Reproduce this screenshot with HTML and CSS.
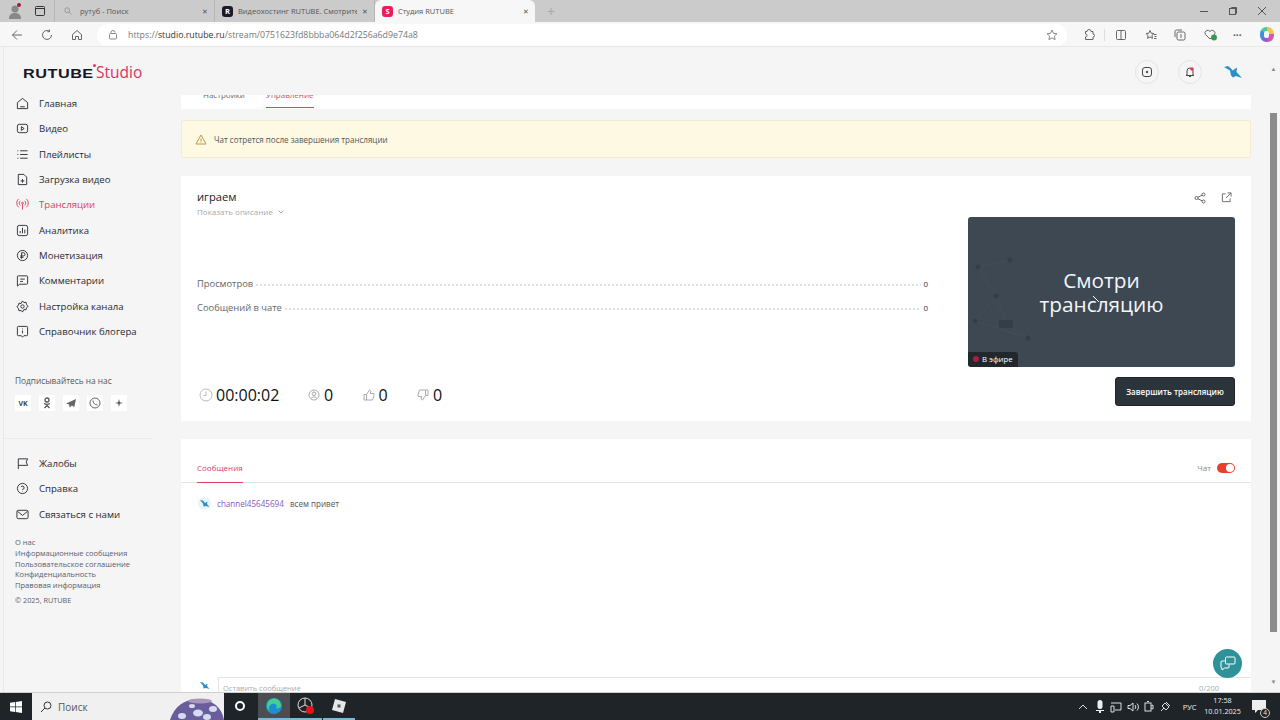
FILE: index.html
```html
<!DOCTYPE html>
<html lang="ru">
<head>
    <meta charset="UTF-8">
    <meta name="viewport" content="width=device-width, initial-scale=1.0">
    <title>Студия RUTUBE</title>
    <link rel="stylesheet" href="styles.css">
</head>
<body>
    <div class="tabstrip">
        <div class="profile">
            <svg width="16" height="18" viewBox="0 0 16 18"><circle cx="7" cy="7" r="3.5" fill="#888"/><path d="M1 17c0-5 3-6 6-6s6 1 6 6z" fill="#888"/><circle cx="11" cy="3" r="2" fill="#a01c3c"/></svg>
        </div>
        <div class="ws-icon">
            <svg width="12" height="12" viewBox="0 0 12 12" fill="none" stroke="#333"><rect x="1.5" y="1.5" width="9" height="9" rx="1"/><path d="M1.5 3.5h9"/></svg>
        </div>
        <div class="tab tab-first">
            <svg width="8" height="8" viewBox="0 0 8 8" fill="none" stroke="#999"><circle cx="3.2" cy="3.2" r="2.4"/><path d="M5 5l2.5 2.5"/></svg>
            <span class="tab-title">рутуб - Поиск</span>
            <span class="tab-x">✕</span>
        </div>
        <div class="tab">
            <span class="favicon favicon-dark">R</span>
            <span class="tab-title">Видеохостинг RUTUBE. Смотрите</span>
            <span class="tab-x">✕</span>
        </div>
        <div class="tab tab-active">
            <span class="favicon favicon-pink">S</span>
            <span class="tab-title">Студия RUTUBE</span>
            <span class="tab-x">✕</span>
        </div>
        <div class="tab-plus">+</div>
        <div class="window-btns">
            <svg width="10" height="10" viewBox="0 0 10 10" stroke="#555" fill="none"><path d="M1 5.5h8"/></svg>
            <svg width="10" height="10" viewBox="0 0 10 10" stroke="#555" fill="none"><rect x="1.5" y="2.5" width="6" height="6"/><path d="M3.5 2.5v-1h5v6h-1"/></svg>
            <svg width="10" height="10" viewBox="0 0 10 10" stroke="#555" fill="none"><path d="M1 1l8 8M9 1l-8 8"/></svg>
        </div>
    </div>

    <div class="toolbar">
        <div class="nav-btns">
            <svg width="12" height="12" viewBox="0 0 12 12" fill="none" stroke="#666"><path d="M11 6H1.500M6 1.500L1.500 6 6 10.500"/></svg>
            <svg width="12" height="12" viewBox="0 0 12 12" fill="none" stroke="#666"><path d="M10.500 6A4.500 4.500 0 1 1 8.500 2.200M8.500.5v2.200h-2.200"/></svg>
            <svg width="12" height="12" viewBox="0 0 12 12" fill="none" stroke="#666"><path d="M1.500 5.500L6 1.500l4.500 4v5H7.500V7.500h-3v3h-3z"/></svg>
        </div>
        <div class="address">
            <svg width="10" height="10" viewBox="0 0 10 10" fill="none" stroke="#888"><rect x="1.500" y="3.500" width="7" height="5.500" rx="1"/><path d="M3 3.500V2.500a2 2 0 0 1 4 0"/></svg>
            <span class="url">https://<b>studio.rutube.ru</b>/stream/0751623fd8bbba064d2f256a6d9e74a8</span>
            <svg class="addr-star" width="12" height="12" viewBox="0 0 12 12" fill="none" stroke="#888"><path d="M6 1l1.500 3.300 3.500.4-2.600 2.400.7 3.500L6 8.900l-3.100 1.700.7-3.500L1 4.700l3.500-.4z"/></svg>
        </div>
        <div class="browser-tools">
            <svg width="12" height="12" viewBox="0 0 12 12" fill="none" stroke="#666"><path d="M4 2.500a2 2 0 0 1 4 0H10v2.500a1.500 1.500 0 0 1 0 3v2.500H2.500V8a1.500 1.500 0 0 0 0-3V2.500z"/></svg>
            <span class="tool-sep"></span>
            <svg width="12" height="12" viewBox="0 0 12 12" fill="none" stroke="#666"><rect x="1.500" y="1.500" width="9" height="9" rx="1"/><path d="M6 1.500v9"/></svg>
            <svg width="12" height="12" viewBox="0 0 12 12" fill="none" stroke="#666"><path d="M5 1.500l1.200 2.700 2.800.3-2.100 2 .6 2.800L5 8l-2.500 1.300.6-2.800-2.100-2 2.800-.3zM9 5.500h2.500M9.500 7.500h2M9 9.500h2.500"/></svg>
            <svg width="12" height="12" viewBox="0 0 12 12" fill="none" stroke="#666"><rect x="3" y="3" width="8" height="8" rx="1.500"/><path d="M1 8V2.500A1.500 1.500 0 0 1 2.500 1H8M7 5v4"/></svg>
            <svg width="14" height="12" viewBox="0 0 14 12"><path d="M6 10L1.500 5.500a2.500 2.500 0 0 1 4.500-3 2.500 2.500 0 0 1 4.500 3z" fill="none" stroke="#666"/><circle cx="10" cy="8.500" r="3" fill="#3a9a55"/></svg>
            <span class="dots">···</span>
            <span class="copilot"></span>
        </div>
    </div>

    <div class="app">
        <header class="app-head">
            <div class="logo"><span class="logo-rt">RUTUBE</span><span class="logo-dot"></span><span class="logo-st">Studio</span></div>
            <div class="head-actions">
                <span class="round-btn">
                    <svg width="12" height="12" viewBox="0 0 12 12" fill="none" stroke="#444"><rect x="1.500" y="1.500" width="9" height="9" rx="2.500"/><circle cx="6" cy="6" r=".8" fill="#444"/></svg>
                </span>
                <span class="round-btn">
                    <svg width="12" height="12" viewBox="0 0 12 12" fill="none" stroke="#444"><path d="M3 9V5a3 3 0 0 1 6 0v4l1 .5H2zM5 10.500h2"/><circle cx="8" cy="3" r="1.800" fill="#e8355f" stroke="none"/></svg>
                </span>
                <svg class="bird" width="18" height="14" viewBox="0 0 18 14"><path d="M0 2l4-1 3 2.500 1.500 2 4.500-3-.5 4.500L18 13l-6-2-3 1.500-2-2-1-5z" fill="#2b8fc9"/></svg>
            </div>
        </header>

        <div class="app-body">
            <aside class="sidebar">
                <nav class="side-nav side-nav-top">
                    <a class="side-link"><svg viewBox="0 0 14 14"><path d="M1.500 6L7 1.500 12.500 6v6.500h-11zM4.500 10.500h5"/></svg>Главная</a>
                    <a class="side-link"><svg viewBox="0 0 14 14"><rect x="1.500" y="2.500" width="11" height="9" rx="2"/><path d="M5.800 5l3 2-3 2z"/></svg>Видео</a>
                    <a class="side-link"><svg viewBox="0 0 14 14"><path d="M4.500 3h8M4.500 7h8M4.500 11h8M1.500 3h1M1.500 7h1M1.500 11h1"/></svg>Плейлисты</a>
                    <a class="side-link"><svg viewBox="0 0 14 14"><path d="M2.500 1.500h6l3 3v8h-9zM7 6.500v4M5 8.500h4"/></svg>Загрузка видео</a>
                    <a class="side-link side-link-on"><svg viewBox="0 0 14 14"><circle cx="7" cy="5.500" r="1"/><path d="M7 6.500v6M4.800 8A3 3 0 0 1 4.800 3M9.200 3a3 3 0 0 1 0 5M2.800 10a6 6 0 0 1 0-9M11.200 1a6 6 0 0 1 0 9"/></svg>Трансляции</a>
                    <a class="side-link"><svg viewBox="0 0 14 14"><rect x="1.500" y="1.500" width="11" height="11" rx="2"/><path d="M4.500 10V7.500M7 10V4M9.500 10V6"/></svg>Аналитика</a>
                    <a class="side-link"><svg viewBox="0 0 14 14"><circle cx="7" cy="7" r="5.500"/><path d="M6 10.500V4h2a1.700 1.700 0 0 1 0 3.500H4.500M4.500 9H8"/></svg>Монетизация</a>
                    <a class="side-link"><svg viewBox="0 0 14 14"><path d="M2.500 2h9a1 1 0 0 1 1 1v7a1 1 0 0 1-1 1H4l-2.500 2V3a1 1 0 0 1 1-1zM4.500 5.500h5M4.500 8h3"/></svg>Комментарии</a>
                    <a class="side-link"><svg viewBox="0 0 14 14"><path d="M7 1l1.500 1.800 2.300-.4.500 2.300L13 7l-1.700 1.300-.5 2.300-2.300-.4L7 13l-1.500-1.800-2.300.4-.5-2.300L1 7l1.700-1.300.5-2.300 2.300.4z"/><circle cx="7" cy="7" r="1.800"/></svg>Настройка канала</a>
                    <a class="side-link"><svg viewBox="0 0 14 14"><path d="M2.500 1.500h9a1 1 0 0 1 1 1v8a1 1 0 0 1-1 1H8.500L7 13l-1.500-1.500h-3a1 1 0 0 1-1-1v-8a1 1 0 0 1 1-1zM7 6v3M7 3.800v.8"/></svg>Справочник блогера</a>
                </nav>

                <div class="follow">
                    <p class="follow-title">Подписывайтесь на нас</p>
                    <div class="socials">
                        <span class="social social-vk">VK</span>
                        <span class="social"><svg width="10" height="12" viewBox="0 0 10 12" fill="none" stroke="#555" stroke-width="1.300"><circle cx="5" cy="3" r="2"/><path d="M2 6.500c2 1.200 4 1.200 6 0M5 7.500v1M2.500 11L5 8.500 7.500 11"/></svg></span>
                        <span class="social"><svg width="12" height="11" viewBox="0 0 12 11"><path d="M11 1L1 5.500l3 1 .8 3 2-2 2.500 1.500z" fill="#666"/></svg></span>
                        <span class="social"><svg width="12" height="12" viewBox="0 0 12 12" fill="none" stroke="#666"><circle cx="6" cy="6" r="5"/><path d="M4 3.500c0 2.500 2 4.500 4.500 4.500"/></svg></span>
                        <span class="social"><svg width="8" height="8" viewBox="0 0 8 8"><path d="M4 0l.8 3.200L8 4l-3.200.8L4 8l-.8-3.200L0 4l3.200-.8z" fill="#555"/></svg></span>
                    </div>
                </div>

                <nav class="side-nav side-nav-low">
                    <a class="side-link"><svg viewBox="0 0 14 14"><path d="M2.500 13V2h10l-1.500 3.500 1.500 3.500H2.500"/></svg>Жалобы</a>
                    <a class="side-link"><svg viewBox="0 0 14 14"><circle cx="7" cy="7" r="5.500"/><path d="M5.300 5.500A1.800 1.800 0 1 1 7 8v.5M7 10v.5"/></svg>Справка</a>
                    <a class="side-link"><svg viewBox="0 0 14 14"><rect x="1" y="2.500" width="12" height="9" rx="1.500"/><path d="M1.500 3.500L7 8l5.500-4.500"/></svg>Связаться с нами</a>
                </nav>

                <div class="legal">
                    <a>О нас</a>
                    <a>Информационные сообщения</a>
                    <a>Пользовательское соглашение</a>
                    <a>Конфиденциальность</a>
                    <a>Правовая информация</a>
                    <p class="copyright">© 2025, RUTUBE</p>
                </div>
            </aside>

            <main class="content">
                <div class="subtabs">
                    <span class="subtab">Настройки</span>
                    <span class="subtab subtab-on">Управление</span>
                </div>

                <div class="notice">
                    <svg width="12" height="11" viewBox="0 0 12 11" fill="none" stroke="#b89a4a"><path d="M6 1l5 9H1zM6 4.500v3M6 8.500v.5"/></svg>
                    Чат сотрется после завершения трансляции
                </div>

                <section class="card stream">
                    <div class="stream-info">
                        <h2 class="stream-title">играем</h2>
                        <p class="stream-more">Показать описание <svg class="chev" width="6" height="4" viewBox="0 0 6 4" fill="none" stroke="#aaa"><path d="M.5.500L3 3 5.500.5"/></svg></p>
                        <div class="leaders">
                            <div class="leader"><span>Просмотров</span><i></i><span class="leader-val">0</span></div>
                            <div class="leader"><span>Сообщений в чате</span><i></i><span class="leader-val">0</span></div>
                        </div>
                        <div class="counters">
                            <span class="counter counter-time">
                                <svg width="14" height="14" viewBox="0 0 14 14" fill="none" stroke="#bbb"><circle cx="7" cy="7" r="6"/><path d="M7 3.500V7.500H4.500"/></svg>
                                00:00:02
                            </span>
                            <span class="counter">
                                <svg width="12" height="12" viewBox="0 0 12 12" fill="none" stroke="#aaa"><circle cx="6" cy="6" r="5"/><circle cx="6" cy="4.800" r="1.800"/><path d="M3 9.500c1-2 5-2 6 0"/></svg>
                                0
                            </span>
                            <span class="counter">
                                <svg width="12" height="12" viewBox="0 0 12 12" fill="none" stroke="#aaa"><path d="M1 5.500h2.500v5.500H1zM3.500 5.500L6.500 1c1.200 0 1.500 1 1.200 2L7.200 4.500H11v2L9.500 11h-6"/></svg>
                                0
                            </span>
                            <span class="counter">
                                <svg width="12" height="12" viewBox="0 0 12 12" fill="none" stroke="#aaa"><path d="M11 6.500H8.500V1H11zM8.500 6.500L5.500 11c-1.200 0-1.500-1-1.200-2l.5-1.500H1v-2L2.500 1h6"/></svg>
                                0
                            </span>
                        </div>
                    </div>
                    <div class="stream-side">
                        <div class="stream-icons">
                            <svg width="12" height="12" viewBox="0 0 12 12" fill="none" stroke="#666"><circle cx="2.500" cy="6" r="1.500"/><circle cx="9.500" cy="2.500" r="1.500"/><circle cx="9.500" cy="9.500" r="1.500"/><path d="M4 5.200l4.200-2M4 6.800l4.200 2"/></svg>
                            <svg width="11" height="11" viewBox="0 0 12 12" fill="none" stroke="#666"><path d="M5 2H1.500v8.500H10V7M7 1h4v4M11 1L5.500 6.500"/></svg>
                        </div>
                        <div class="preview">
                            <svg class="preview-dots" width="70" height="130" viewBox="0 0 70 130">
                                <path d="M10 50L42 43M10 50L28 79M28 79L7 104M28 79L38 107M7 104L60 121M38 107L60 121" stroke="#434e59" fill="none"/>
                                <g fill="#343e48">
                                    <circle cx="10" cy="50" r="2.500"/><circle cx="42" cy="43" r="2.500"/><circle cx="28" cy="79" r="2.500"/><circle cx="7" cy="104" r="2.500"/><circle cx="60" cy="121" r="2.500"/>
                                    <rect x="31" y="103" width="14" height="8" rx="1"/>
                                </g>
                            </svg>
                            <p class="preview-text">Смотри<br>трансляцию</p>
                            <svg class="preview-cursor" width="10" height="9" viewBox="0 0 10 9" fill="none" stroke="#fff"><path d="M1 1l6 6"/></svg>
                            <span class="live-badge"><i></i>В эфире</span>
                        </div>
                        <button class="end-btn">Завершить трансляцию</button>
                    </div>
                </section>

                <section class="card chat">
                    <div class="chat-head">
                        <span class="chat-tab">Сообщения</span>
                        <span class="chat-switch">Чат <i class="toggle"></i></span>
                    </div>
                    <div class="chat-feed">
                        <div class="msg">
                            <svg class="avatar" width="13" height="13" viewBox="0 0 13 13"><circle cx="6.500" cy="6.500" r="6.500" fill="#eaf3f8"/><path d="M2 3l3 .5 2 2.500 2.500-1.500L9 7l2.500 3L8 9l-2.500.5-.5-3z" fill="#2b8fc9"/></svg>
                            <span class="msg-name">channel45645694</span>
                            <span class="msg-text">всем привет</span>
                        </div>
                    </div>
                    <div class="chat-input">
                        <svg class="avatar" width="13" height="13" viewBox="0 0 13 13"><path d="M2 3l3 .5 2 2.500 2.500-1.500L9 7l2.500 3L8 9l-2.500.5-.5-3z" fill="#2b8fc9"/></svg>
                        <div class="input-box">
                            <span>Оставить сообщение</span>
                            <span>0/200</span>
                        </div>
                    </div>
                </section>
            </main>

            <div class="scrollbar">
                <span class="scroll-arrow">▲</span>
                <span class="scroll-thumb"></span>
                <span class="scroll-arrow">▼</span>
            </div>
        </div>

        <button class="support">
            <svg width="16" height="15" viewBox="0 0 16 15" fill="none" stroke="#fff"><rect x="5.500" y="1" width="9.500" height="7" rx="1"/><path d="M5 5H2a1 1 0 0 0-1 1v5a1 1 0 0 0 1 1v2l2.500-2H8a1 1 0 0 0 1-1V8.500"/></svg>
        </button>
    </div>

    <footer class="taskbar">
        <div class="start">
            <svg width="12" height="12" viewBox="0 0 12 12" fill="#fff"><path d="M0 1.700L5 1v4.600H0zM5.700.9L12 0v5.600H5.700zM0 6.300h5v4.700l-5-.7zM5.700 6.300H12V12l-6.300-.9z"/></svg>
        </div>
        <div class="task-search">
            <svg width="12" height="12" viewBox="0 0 12 12" fill="none" stroke="#333"><circle cx="7.500" cy="4.500" r="3.500"/><path d="M5 7l-4 4"/></svg>
            <span>Поиск</span>
            <svg class="search-art" width="54" height="24" viewBox="0 0 54 24"><path d="M0 24C4 10 16 2 30 3c12 1 22 8 24 21z" fill="#6a5d9c"/><ellipse cx="30" cy="5" rx="12" ry="2.500" fill="#a996b8"/><g fill="#d4dcf2"><ellipse cx="12" cy="20" rx="4" ry="3"/><ellipse cx="28" cy="17" rx="5" ry="3.500"/><ellipse cx="43" cy="13" rx="4" ry="3"/><ellipse cx="22" cy="10" rx="3" ry="2"/><ellipse cx="37" cy="21" rx="4" ry="3"/></g></svg>
        </div>
        <div class="task-apps">
            <span class="task-app"><i class="cortana"></i></span>
            <span class="task-app task-app-on">
                <svg width="18" height="18" viewBox="0 0 18 18"><circle cx="9" cy="9" r="8" fill="#1b8fd6"/><path d="M2 9a7 7 0 0 1 14-1c0 3-3 4-5 3 2-3-1-5-4-4-3 1-4 4-2 7-2-1-3-3-3-5z" fill="#46d08c"/></svg>
            </span>
            <span class="task-app task-app-open">
                <svg width="18" height="18" viewBox="0 0 18 18"><circle cx="8" cy="8" r="7" fill="#222" stroke="#ddd"/><path d="M8 1v7l6 3M8 8l-6 3" stroke="#ddd" fill="none"/><circle cx="13" cy="13" r="4" fill="#e8141c"/></svg>
            </span>
            <span class="task-app task-app-open">
                <svg width="16" height="16" viewBox="0 0 16 16"><path d="M4 1l11 3-3 11L1 12z" fill="#e6e6e6"/><rect x="6.500" y="6.500" width="3" height="3" fill="#555"/></svg>
            </span>
        </div>
        <div class="tray">
            <div class="tray-icons">
                <svg width="10" height="6" viewBox="0 0 10 6" fill="none" stroke="#ddd"><path d="M1 5l4-4 4 4"/></svg>
                <svg width="8" height="13" viewBox="0 0 8 13" fill="#eee"><rect x="1.500" width="5" height="9" rx="2.500"/><path d="M0 10h8v1H0zM3 11h2v2H3z"/></svg>
                <svg width="12" height="12" viewBox="0 0 12 12" fill="none" stroke="#ddd"><path d="M1 2h10v7H5M1 5v6h3V5z"/></svg>
                <svg width="12" height="10" viewBox="0 0 12 10" fill="none" stroke="#ddd"><path d="M1 3.500h2L6 1v8L3 6.500H1zM8 3a3 3 0 0 1 0 4M10 1.500a5 5 0 0 1 0 7"/></svg>
                <svg width="10" height="12" viewBox="0 0 10 12" fill="none" stroke="#ddd"><rect x="1" y="2" width="6" height="8"/><path d="M7 5l2-1v4L7 7M3 .5h2"/></svg>
                <svg width="12" height="12" viewBox="0 0 12 12" fill="none" stroke="#ddd"><path d="M2 10l3-3M6 2l4 4-3 3-4-4zM7 1l4 4"/></svg>
            </div>
            <span class="tray-lang">РУС</span>
            <span class="tray-clock">17:58<br>10.01.2025</span>
            <span class="tray-notif">
                <svg width="14" height="13" viewBox="0 0 14 13" fill="#eee"><path d="M0 0h14v10H6l-3 3v-3H0z"/></svg>
                <i class="notif-count">4</i>
            </span>
        </div>
    </footer>
</body>
</html>
```

FILE: styles.css
```css
* {
    box-sizing: border-box;
}
body {
    font-family: "Open Sans", "Noto Sans", sans-serif;
    background-color: #f5f5f5;
    color: #222;
    margin: 0;
    width: 1280px;
    height: 720px;
    overflow: hidden;
    display: flex;
    flex-direction: column;
}
p, h2 {
    margin: 0;
}

/* browser chrome */
.tabstrip {
    height: 22px;
    flex: none;
    background-color: #cbcbcb;
    display: flex;
    align-items: center;
    font-size: 7.5px;
    color: #555;
}
.profile {
    width: 32px;
    padding-left: 8px;
    display: flex;
}
.ws-icon {
    width: 22px;
    padding-left: 2px;
    display: flex;
}
.tab {
    width: 160px;
    height: 22px;
    padding: 0 4px 0 7px;
    display: flex;
    align-items: center;
    gap: 5px;
    border-right: 1px solid #b5b5b5;
}
.tab-first {
    width: 161px;
    padding-left: 9px;
    gap: 7px;
    border-left: 1px solid #b5b5b5;
}
.tab-active {
    background-color: #f7f7f7;
    border-right: 0;
    border-radius: 6px 6px 0 0;
}
.tab-title {
    flex: 1;
    white-space: nowrap;
    overflow: hidden;
    padding-left: 1px;
}
.tab-x {
    font-size: 7px;
    margin-right: 2px;
}
.favicon {
    width: 11px;
    height: 11px;
    border-radius: 3px;
    color: #fff;
    font-size: 7.5px;
    font-weight: 700;
    line-height: 11px;
    text-align: center;
    margin-right: -1px;
}
.favicon-dark {
    background-color: #1a1a2c;
}
.favicon-pink {
    background-color: #e5205e;
}
.tab-plus {
    margin-left: 12px;
    font-size: 14px;
    color: #a8a8a8;
}
.window-btns {
    margin-left: auto;
    padding-right: 13px;
    display: flex;
    gap: 19px;
}
.toolbar {
    height: 25px;
    flex: none;
    background-color: #f7f7f7;
    display: flex;
    align-items: center;
    padding-top: 1px;
    border-bottom: 1px solid #e8e8e8;
}
.nav-btns {
    width: 97px;
    padding-left: 11px;
    display: flex;
    gap: 18px;
}
.address {
    width: 970px;
    height: 22px;
    background-color: #fff;
    border-radius: 11px;
    display: flex;
    align-items: center;
    padding: 0 9px 0 11px;
    gap: 10px;
}
.url {
    font-size: 8.77px;
    color: #777;
}
.url b {
    font-weight: 400;
    color: #333;
}
.addr-star {
    margin-left: auto;
}
.browser-tools {
    flex: 1;
    padding-left: 16px;
    display: flex;
    align-items: center;
    gap: 17.5px;
}
.tool-sep {
    width: 1px;
    height: 12px;
    margin: 0 -7px 0 -9px;
    background-color: #ddd;
}
.dots {
    font-size: 10px;
    font-weight: 700;
    color: #555;
    width: 9px;
    margin-left: -2px;
}
.copilot {
    width: 14px;
    height: 15px;
    border-radius: 45%;
    background: conic-gradient(#f2c14e 0 25%, #d655b0 25% 50%, #8e5ad6 50% 62%, #3f8fe0 62% 85%, #46c8a0 85% 100%);
    display: flex;
    align-items: center;
    justify-content: center;
}
.copilot::after {
    content: "";
    width: 5px;
    height: 7px;
    background-color: #f7f7f7;
    border-radius: 2px;
}

/* studio shell */
.app {
    flex: 1;
    min-height: 0;
    position: relative;
    display: flex;
    flex-direction: column;
    margin-left: 3px;
    border-left: 1px solid #e8e8e8;
}
.app-head {
    height: 48px;
    flex: none;
    display: flex;
    align-items: center;
    justify-content: space-between;
    padding: 2px 38px 0 19px;
}
.logo {
    display: flex;
    align-items: baseline;
    position: relative;
}
.logo-rt {
    font-family: "Liberation Sans", sans-serif;
    font-size: 13px;
    font-weight: 700;
    letter-spacing: .4px;
    transform: scaleX(1.25);
    transform-origin: left;
    width: 73px;
    color: #17171f;
}
.logo-st {
    font-size: 15.5px;
    line-height: 18px;
    color: #d8325f;
}
.logo-dot {
    position: absolute;
    left: 70px;
    top: 1px;
    width: 3px;
    height: 3px;
    border-radius: 50%;
    background-color: #e8355f;
}
.head-actions {
    display: flex;
    align-items: center;
    gap: 18.5px;
}
.round-btn {
    width: 24px;
    height: 24px;
    border: 1px solid #e3e3e3;
    border-radius: 50%;
    display: flex;
    align-items: center;
    justify-content: center;
}
.bird {
    margin-left: 4px;
}
.app-body {
    flex: 1;
    min-height: 0;
    display: flex;
}

/* left menu */
.sidebar {
    width: 177px;
    flex: none;
    font-size: 9.6px;
}
.side-nav {
    display: flex;
    flex-direction: column;
}
.side-nav-top {
    margin-top: -4px;
}
.side-link {
    height: 25.3px;
    display: flex;
    align-items: center;
    gap: 10px;
    padding-left: 12px;
    color: #2b2b33;
}
.side-link svg {
    width: 13px;
    height: 13px;
    fill: none;
    stroke: #2b2b33;
    flex: none;
}
.side-link-on {
    color: #e0405f;
}
.side-link-on svg {
    stroke: #e0405f;
}
.follow {
    margin-top: 31.5px;
    padding: 0 0 27px 11px;
    width: 148px;
    border-bottom: 1px solid #ececec;
}
.follow-title {
    font-size: 8.3px;
    color: #555;
    margin-bottom: 9px;
}
.socials {
    display: flex;
    gap: 8px;
}
.social {
    width: 16px;
    height: 16px;
    background-color: #fff;
    display: flex;
    align-items: center;
    justify-content: center;
    color: #444;
}
.social-vk {
    font-size: 7px;
    font-weight: 700;
}
.side-nav-low {
    margin-top: 11.5px;
}
.legal {
    margin-top: 10.5px;
    padding-left: 11px;
    display: flex;
    flex-direction: column;
    font-size: 7.55px;
    line-height: 10.6px;
    color: #5c5c6c;
}
.copyright {
    margin-top: 5px;
    font-size: 7.3px;
}

/* main column */
.content {
    width: 1070px;
    flex: none;
    overflow: hidden;
    display: flex;
    flex-direction: column;
}
.subtabs {
    height: 14px;
    flex: none;
    background-color: #fff;
    overflow: hidden;
    display: flex;
    align-items: flex-end;
    gap: 21px;
    padding-left: 22px;
    font-size: 8px;
    color: #666;
}
.subtab {
    height: 13px;
    line-height: 1;
    margin-top: -9px;
    transform: translateY(-5px);
}
.subtab-on {
    color: #e0405f;
    position: relative;
}
.subtab-on::after {
    content: "";
    position: absolute;
    left: 0;
    right: 0;
    bottom: -4px;
    height: 1px;
    background-color: #e0405f;
}
.notice {
    margin-top: 11px;
    height: 38px;
    flex: none;
    background-color: #fdf9e3;
    border: 1px solid #f3ecd0;
    border-radius: 2px;
    display: flex;
    align-items: center;
    gap: 7px;
    padding-left: 13px;
    font-size: 8.03px;
    color: #555;
}
.card {
    background-color: #fff;
}
.stream {
    margin-top: 18px;
    height: 245px;
    flex: none;
    display: flex;
    padding: 14px 16px 15px;
}
.stream-info {
    flex: 1;
    display: flex;
    flex-direction: column;
    padding-right: 40px;
}
.stream-title {
    font-size: 11.2px;
    font-weight: 400;
    line-height: 14px;
    color: #222;
}
.stream-more {
    font-size: 8px;
    line-height: 12px;
    margin-top: 2px;
    color: #aaa;
}
.chev {
    margin-left: 3px;
    vertical-align: 1px;
}
.leaders {
    margin-top: 59.5px;
    display: flex;
    flex-direction: column;
    gap: 12px;
    font-size: 9.35px;
    line-height: 12px;
    color: #666;
}
.leader {
    display: flex;
    align-items: center;
}
.leader i {
    flex: 1;
    height: 2px;
    margin: 3px 2px 0;
    background-image: radial-gradient(circle, #bbb .6px, transparent .8px);
    background-size: 4px 2px;
}
.leader-val {
    font-size: 8px;
    color: #333;
}
.counters {
    margin-top: auto;
    margin-bottom: 1px;
    display: flex;
    align-items: center;
    font-size: 16px;
    line-height: 20px;
    color: #111;
}
.counter {
    display: flex;
    align-items: center;
    gap: 4px;
    width: 54.500px;
}
.counter svg {
    flex: none;
}
.counter-time {
    width: 111px;
    padding-left: 2px;
    gap: 3px;
}
.stream-side {
    width: 267px;
    flex: none;
    display: flex;
    flex-direction: column;
}
.stream-icons {
    height: 27px;
    padding: 2px 3px 0 0;
    display: flex;
    justify-content: flex-end;
    gap: 15px;
}
.preview {
    height: 150px;
    flex: none;
    position: relative;
    overflow: hidden;
    background-color: #3d4853;
    border-radius: 3px;
    display: flex;
    align-items: center;
    justify-content: center;
}
.preview-dots {
    position: absolute;
    left: 0;
    top: 0;
}
.preview-text {
    font-size: 20.8px;
    line-height: 24px;
    text-align: center;
    color: #f4f6f8;
    padding-bottom: 1px;
    position: relative;
}
.preview-cursor {
    position: absolute;
    left: 124px;
    top: 78px;
}
.live-badge {
    position: absolute;
    left: 0;
    bottom: 0;
    height: 15px;
    padding: 0 5px 1px;
    display: flex;
    align-items: center;
    gap: 3px;
    font-size: 7.8px;
    color: #fff;
    background-color: #22272d;
    border-radius: 0 3px 0 3px;
}
.live-badge i {
    width: 6px;
    height: 6px;
    border-radius: 50%;
    background-color: #a8203f;
}
.end-btn {
    margin: 10px 0 0 auto;
    width: 120px;
    height: 29px;
    padding: 0;
    border: 1px solid #1f262b;
    border-radius: 3px;
    background-color: #2b343b;
    color: #fff;
    font-family: inherit;
    font-size: 8px;
    font-weight: 600;
}
.chat {
    margin-top: 18px;
    flex: 1;
    min-height: 0;
    display: flex;
    flex-direction: column;
}
.chat-head {
    height: 44px;
    flex: none;
    display: flex;
    align-items: center;
    justify-content: space-between;
    padding: 15px 16px 0;
    border-bottom: 1px solid #e4e4e4;
    font-size: 8px;
}
.chat-tab {
    align-self: flex-end;
    height: 29px;
    line-height: 28px;
    color: #e0405f;
    border-bottom: 1px solid #e0405f;
    margin-bottom: -1px;
}
.chat-switch {
    display: flex;
    align-items: center;
    gap: 6px;
    color: #888;
    margin-top: -1px;
}
.toggle {
    width: 18px;
    height: 10px;
    border-radius: 5px;
    background-color: #e8402f;
    position: relative;
}
.toggle::after {
    content: "";
    position: absolute;
    right: 1px;
    top: 1px;
    width: 8px;
    height: 8px;
    border-radius: 50%;
    background-color: #fff;
}
.chat-feed {
    flex: 1;
    padding: 14px 17px;
}
.msg {
    display: flex;
    align-items: center;
    gap: 6px;
    font-size: 8.1px;
    color: #555;
}
.msg-name {
    color: #8a55c0;
}
.chat-input {
    height: 15px;
    flex: none;
    display: flex;
    padding-left: 17px;
    overflow: hidden;
}
.avatar {
    flex: none;
}
.chat-input .avatar {
    margin-top: 2px;
}
.input-box {
    flex: 1;
    margin-left: 7px;
    height: 30px;
    border-top: 1px solid #e4e4e4;
    border-left: 1px solid #e4e4e4;
    display: flex;
    justify-content: space-between;
    padding: 5px 32px 0 4px;
    font-size: 7.5px;
    color: #aaa;
}
.scrollbar {
    width: 13px;
    margin-left: 16px;
    margin-top: -48px;
    padding: 18px 0 6px;
    flex: none;
    background-color: #f5f5f5;
    display: flex;
    flex-direction: column;
    align-items: center;
    font-size: 6px;
    color: #888;
    height: calc(100% + 48px);
}
.scroll-arrow {
    line-height: 8px;
}
.scroll-thumb {
    width: 7px;
    height: 519px;
    margin: 40px 0 auto;
    background-color: #8c8c8c;
}
.support {
    position: absolute;
    right: 38px;
    bottom: 14px;
    width: 29px;
    height: 29px;
    padding: 0;
    border: none;
    border-radius: 50%;
    background-color: #2f9199;
    display: flex;
    align-items: center;
    justify-content: center;
}

/* windows taskbar */
.taskbar {
    height: 28px;
    flex: none;
    background-color: #1f2428;
    border-top: 1px solid #d0d0d0;
    display: flex;
    align-items: stretch;
    color: #eee;
}
.start {
    width: 32px;
    display: flex;
    align-items: center;
    justify-content: center;
}
.task-search {
    width: 192px;
    background-color: #f0f0f0;
    display: flex;
    align-items: center;
    gap: 6px;
    padding-left: 8px;
    font-size: 10px;
    color: #555;
    position: relative;
    overflow: hidden;
}
.search-art {
    position: absolute;
    right: 0;
    bottom: 0;
}
.task-apps {
    display: flex;
}
.task-app {
    width: 32px;
    display: flex;
    align-items: center;
    justify-content: center;
    border-bottom: 2px solid transparent;
    margin-right: 1px;
}
.task-app-on {
    background-color: #4a4e52;
    border-bottom-color: #7cb8dc;
    margin-left: 1px;
    margin-right: 0;
}
.task-app-open {
    border-bottom-color: #7cb8dc;
}
.cortana {
    width: 10px;
    height: 10px;
    border: 2px solid #fff;
    border-radius: 50%;
}
.tray {
    margin-left: auto;
    display: flex;
    align-items: center;
    padding-right: 14px;
    font-size: 7.5px;
}
.tray-icons {
    display: grid;
    grid-template-columns: repeat(6, 16.4px);
    justify-items: center;
    align-items: center;
}
.tray-lang {
    margin-left: 9px;
}
.tray-clock {
    width: 40px;
    margin: -2px 0 0 6px;
    font-size: 7.2px;
    text-align: center;
    line-height: 11px;
}
.tray-notif {
    margin-left: 9.5px;
    position: relative;
    display: flex;
}
.notif-count {
    position: absolute;
    right: -4px;
    bottom: -5px;
    width: 10px;
    height: 10px;
    border-radius: 50%;
    background-color: #222;
    border: 1px solid #ccc;
    font-style: normal;
    font-size: 6.5px;
    line-height: 8px;
    text-align: center;
}
```
